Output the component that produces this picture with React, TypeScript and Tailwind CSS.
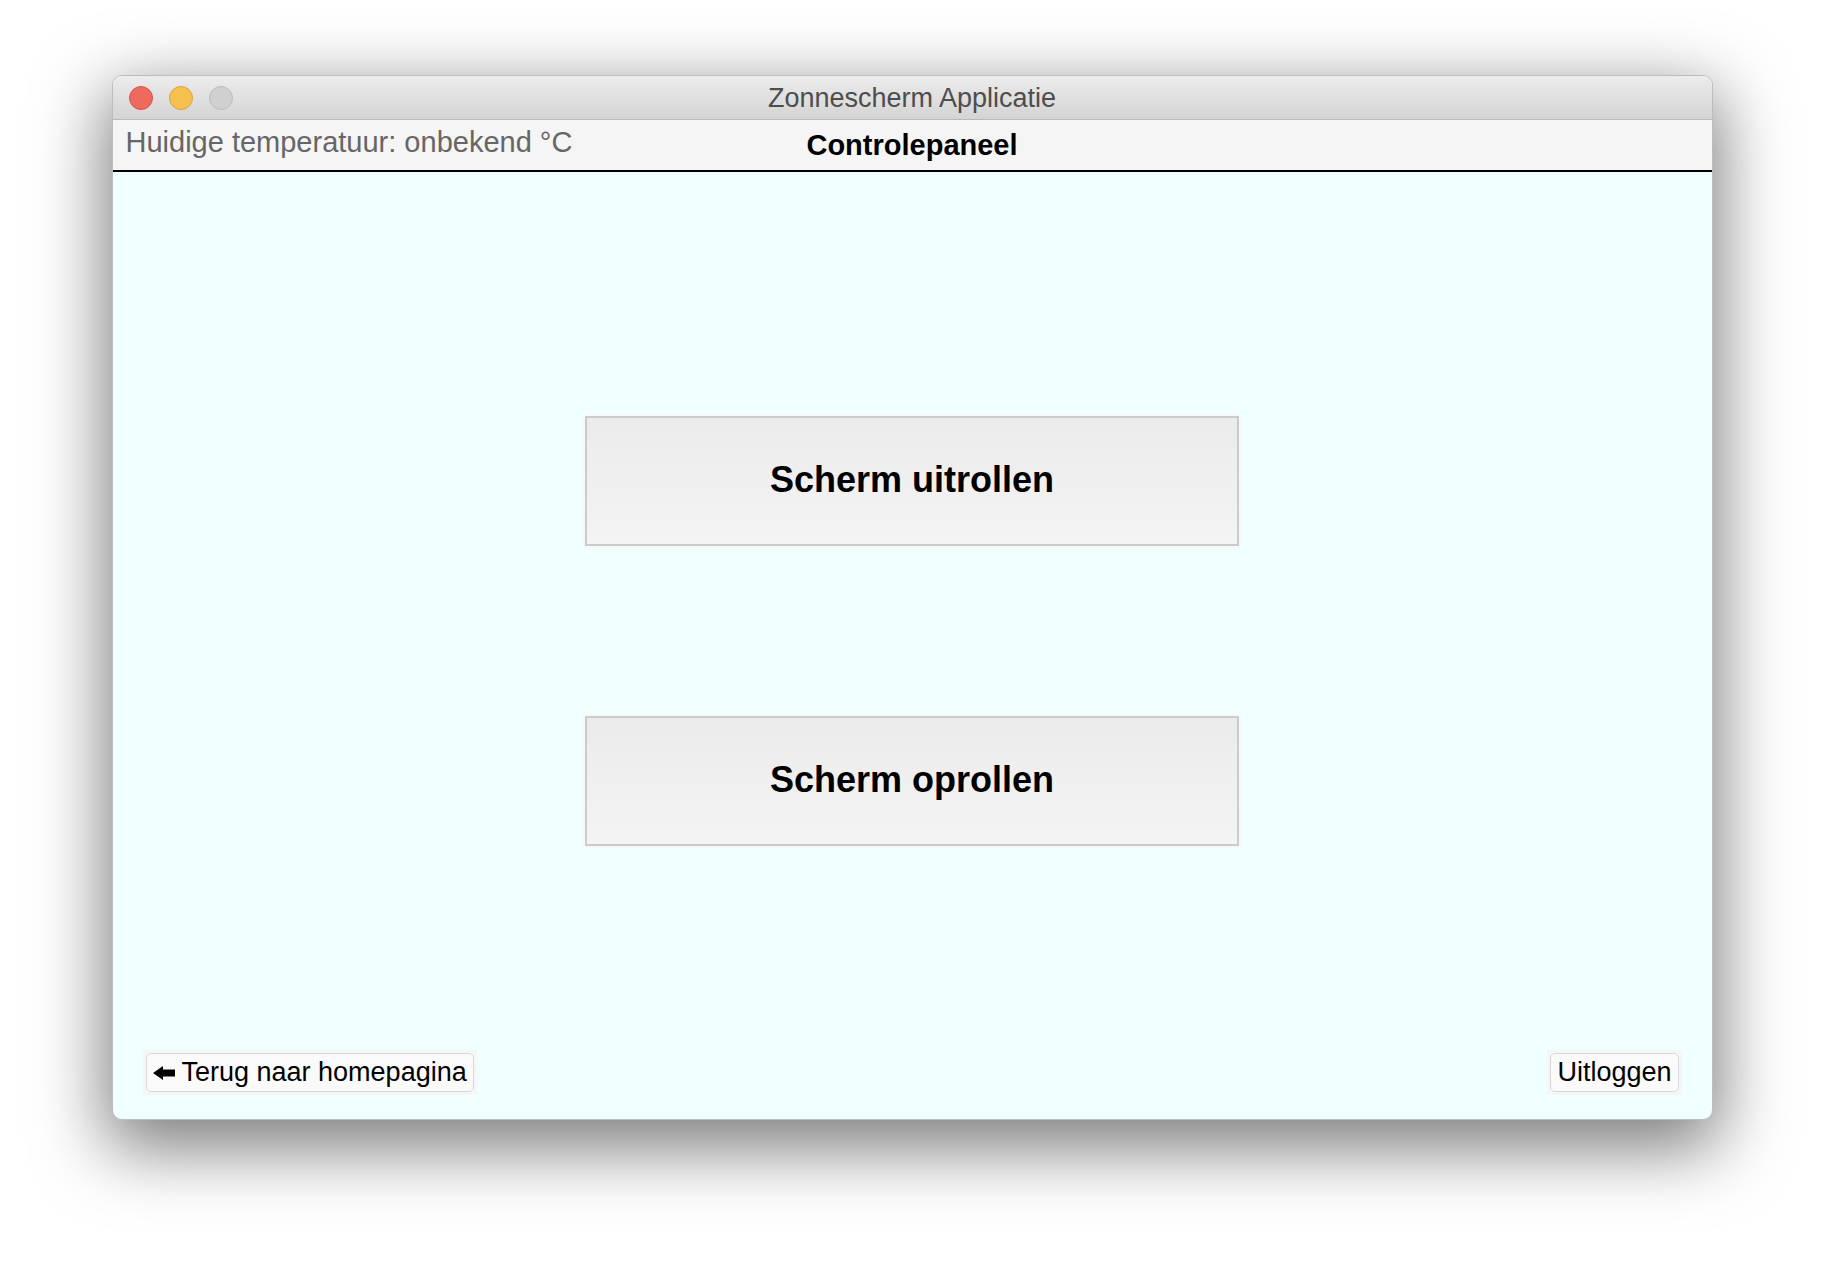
import React from "react";

function TrafficLights() {
  return (
    <div className="flex items-center gap-[16px] pl-[16px]">
      <div className="w-[24px] h-[24px] rounded-full bg-[#ee6a5f] border border-[#d5544b]" />
      <div className="w-[24px] h-[24px] rounded-full bg-[#f5c04f] border border-[#d9a33d]" />
      <div className="w-[24px] h-[24px] rounded-full bg-[#d0d0d0] border border-[#bcbcbc]" />
    </div>
  );
}

function BigButton({ label }: { label: string }) {
  return (
    <div className="p-[2px] bg-[#f7f9f6]">
      <button className="w-[654px] h-[130px] border-2 border-[#cbcbcb] bg-gradient-to-b from-[#ebebeb] to-[#f4f4f4] flex items-center justify-center pb-[2px]">
        <span className="text-[36px] leading-none font-bold text-black">{label}</span>
      </button>
    </div>
  );
}

function SmallButton({ children }: { children: React.ReactNode }) {
  return (
    <div className="p-[3px] bg-[#f5f7f7]">
      <button className="h-[39px] px-[6px] rounded-[5px] border border-[#d9d9d9] bg-[#fafafa] flex items-center gap-[7px]">
        {children}
      </button>
    </div>
  );
}

export default function App() {
  return (
    <div
      className="w-[1824px] h-[1268px] bg-white flex justify-center pt-[75px]"
      style={{ fontFamily: '"Liberation Sans", Arial, sans-serif' }}
    >
      <div className="w-[1601px] h-[1045px] rounded-[10px] overflow-hidden border border-[#bdbdbd] shadow-[0_22px_70px_6px_rgba(0,0,0,0.52)] flex flex-col bg-[#f0ffff]">
        {/* Title bar */}
        <div className="h-[44px] shrink-0 grid grid-cols-[1fr_auto_1fr] items-center bg-gradient-to-b from-[#ececec] to-[#d4d4d4] border-b border-[#b9b9b9]">
          <TrafficLights />
          <div className="text-[27px] leading-none text-[#4d4d4d] pt-[1px]">Zonnescherm Applicatie</div>
          <div />
        </div>
        {/* Header */}
        <div className="h-[52px] shrink-0 grid grid-cols-[1fr_auto_1fr] items-start bg-[#f5f5f5] border-b-2 border-black">
          <div className="pl-[13px] pt-[8px] text-[29px] leading-[29px] text-[#666666]">
            Huidige temperatuur: onbekend °C
          </div>
          <div className="pt-[11px] text-[29px] leading-[29px] font-bold text-black">Controlepaneel</div>
          <div />
        </div>
        {/* Content */}
        <div className="flex-1 flex flex-col items-center pt-[242px]">
          <BigButton label="Scherm uitrollen" />
          <div className="h-[166px]" />
          <BigButton label="Scherm oprollen" />
          <div className="mt-auto w-full flex justify-between items-end px-[30px] pb-[24px]">
            <SmallButton>
              <svg width="22" height="14" viewBox="0 0 22 14" className="shrink-0">
                <path d="M0 7 L10 0 L10 3.5 L22 3.5 L22 10.5 L10 10.5 L10 14 Z" fill="black" />
              </svg>
              <span className="text-[27px] leading-none text-black">Terug naar homepagina</span>
            </SmallButton>
            <SmallButton>
              <span className="text-[27px] leading-none text-black">Uitloggen</span>
            </SmallButton>
          </div>
        </div>
      </div>
    </div>
  );
}
